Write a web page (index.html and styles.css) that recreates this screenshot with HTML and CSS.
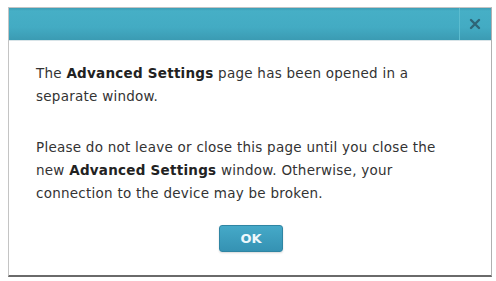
FILE: index.html
```html
<!DOCTYPE html>
<html>
<head>
<meta charset="utf-8">
<link rel="stylesheet" href="styles.css">
</head>
<body>
<div class="dialog">
  <div class="header">
    <span class="sep"></span>
    <button class="close" aria-label="Close">
      <svg width="12" height="12" viewBox="0 0 12 12"><path d="M2 2 L10 10 M10 2 L2 10" stroke="#2f6577" stroke-width="2.4" stroke-linecap="round"/></svg>
    </button>
  </div>
  <div class="content">
    <p>The <b>Advanced Settings</b> page has been opened in a separate window.</p>
    <p>Please do not leave or close this page until you close the new <b>Advanced Settings</b> window. Otherwise, your connection to the device may be broken.</p>
    <div class="actions"><button class="ok">OK</button></div>
  </div>
</div>
</body>
</html>
```
FILE: styles.css
```css
html, body {
  margin: 0;
  background: #fff;
}
body {
  padding: 7px 3px 0 8px;
  font-family: "DejaVu Sans", Verdana, sans-serif;
}
.dialog {
  width: 484px;
  height: 270px;
  border: 1px solid #c4c4c4;
  border-bottom: 2px solid #6a6a6a;
  border-right-color: #b0b0b0;
  box-sizing: border-box;
  background: #fff;
  display: flex;
  flex-direction: column;
}
.header {
  height: 33px;
  flex: none;
  background: linear-gradient(#3c9eb6 0, #46afc6 3px, #43abc3 60%, #3b9bb3 100%);
  border-bottom: 1px solid #d8e4e8;
  box-sizing: border-box;
  display: flex;
  justify-content: flex-end;
  align-items: stretch;
}
.sep {
  width: 1px;
  background: #5cbccf;
}
.close {
  width: 31px;
  border: 0;
  padding: 0 2px 0 0;
  background: transparent;
  display: flex;
  align-items: center;
  justify-content: center;
}
.content {
  padding: 21px 0 0 27px;
  width: 430px;
  color: #333;
  font-size: 13.5px;
  letter-spacing: 0.25px;
  line-height: 23px;
}
.content p {
  margin: 0 0 28px 0;
}
.content b {
  color: #222;
}
.actions {
  display: flex;
  justify-content: center;
  margin-top: -8px;
}
.ok {
  width: 64px;
  height: 27px;
  border: 1px solid #2f85a3;
  border-radius: 3px;
  background: linear-gradient(#45a9c8, #3592b3);
  color: #eef8fc;
  font-family: "DejaVu Sans", Verdana, sans-serif;
  font-weight: bold;
  font-size: 13px;
  padding: 0;
  box-shadow: 0 1px 2px rgba(0,0,0,0.15);
}
```
